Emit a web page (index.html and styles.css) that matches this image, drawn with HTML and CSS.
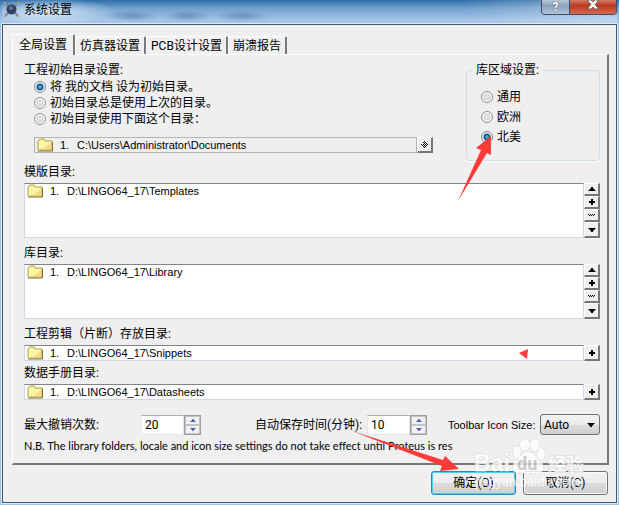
FILE: index.html
```
<!DOCTYPE html>
<html lang="zh-CN">
  <head>
    <meta charset="UTF-8" />
    <meta name="viewport" content="width=device-width, initial-scale=1.0" />
    <title>系统设置</title>
    <link rel="stylesheet" href="styles.css">
  </head>
  <body>
    <svg class="defs" width="0" height="0" aria-hidden="true">
      <symbol id="folder" viewBox="0 0 16 14">
        <path d="M1 12V3l2-2h4l1 2h7v9z" fill="#fbf3a0" stroke="#b0a030" />
        <path d="M2 4h12v1H2zM2 4h1v8H2z" fill="#fffbc8" />
        <path d="M5 12l9-7v7z" fill="#f8cc8c" opacity=".7" />
        <path d="M1 13h14.500V4" fill="none" stroke="#77762e" />
      </symbol>
      <symbol id="up" viewBox="0 0 8 4"><path d="M0 4h8L5 1V0H3v1z" /></symbol>
      <symbol id="down" viewBox="0 0 8 4"><path d="M0 0h8L5 3v1H3V3z" /></symbol>
      <symbol id="plus" viewBox="0 0 6 6"><path d="M2 0h2v2h2v2H4v2H2V4H0V2h2z" /></symbol>
      <symbol id="wave" viewBox="0 0 7 2"><path d="M0 0h1v1H0zM1 1h1v1H1zM2 0h1v1H2zM3 1h1v1H3zM4 0h1v1H4zM5 1h1v1H5zM6 0h1v1H6z" /></symbol>
      <symbol id="browse" viewBox="0 0 7 7"><path d="M3 0h1v1H3zM2 1h1v1H2zM4 1h1v1H4zM3 2h1v1H3zM5 2h1v1H5zM0 3h1v1H0zM2 3h1v1H2zM4 3h1v1H4zM6 3h1v1H6zM1 4h1v1H1zM3 4h1v1H3zM5 4h1v1H5zM2 5h1v1H2zM4 5h1v1H4zM3 6h1v1H3z" /></symbol>
    </svg>

    <div class="window">
      <header class="title-bar">
        <svg class="app-icon" width="15" height="15" viewBox="0 0 15 15" aria-hidden="true">
          <path d="M1 1l13 13M14 1L1 14" stroke="#7485a5" stroke-width="2" />
          <path d="M0 1h2M13 1h2M0 14h2M13 14h2" stroke="#c49a5c" stroke-width="2" />
          <circle cx="7.500" cy="7.500" r="5" fill="#33415f" />
          <circle cx="7" cy="6" r="2" fill="#5f73a0" />
        </svg>
        <h1>系统设置</h1>
        <div class="window-buttons">
          <button class="help" aria-label="帮助">?</button>
          <button class="close" aria-label="关闭">
            <svg width="12" height="10" viewBox="0 0 12 10"><path d="M1 0h3l2 2 2-2h3v1L8 4.500 11 8v1H8L6 7 4 9H1V8l3-3.500L1 1z" fill="#fff" stroke="#555b69" stroke-width=".8" /></svg>
          </button>
        </div>
      </header>

      <main class="client">
        <nav class="tabs">
          <button class="tab active">全局设置</button>
          <button class="tab">仿真器设置</button>
          <button class="tab">PCB设计设置</button>
          <button class="tab">崩溃报告</button>
        </nav>

        <section class="panel">
          <div class="top">
            <div class="initial" role="radiogroup" aria-labelledby="initialTitle">
              <p class="caption" id="initialTitle">工程初始目录设置:</p>
              <label class="option"><input type="radio" name="initial" checked />将 我的文档 设为初始目录。</label>
              <label class="option"><input type="radio" name="initial" />初始目录总是使用上次的目录。</label>
              <label class="option"><input type="radio" name="initial" />初始目录使用下面这个目录：</label>
              <div class="path-row initial-path">
                <div class="path disabled"><svg class="folder"><use href="#folder" /></svg><span>1.</span><span>C:\Users\Administrator\Documents</span></div>
                <div class="path-buttons">
                  <button aria-label="浏览"><svg width="7" height="7"><use href="#browse" /></svg></button>
                </div>
              </div>
            </div>
            <fieldset class="region">
              <legend>库区域设置:</legend>
              <label class="option"><input type="radio" name="region" />通用</label>
              <label class="option"><input type="radio" name="region" />欧洲</label>
              <label class="option"><input type="radio" name="region" checked />北美</label>
            </fieldset>
          </div>

          <div class="folders">
            <p class="caption">模版目录:</p>
            <div class="path-row tall">
              <div class="path"><svg class="folder"><use href="#folder" /></svg><span>1.</span><span>D:\LINGO64_17\Templates</span></div>
              <div class="path-buttons">
                <button aria-label="上移"><svg width="8" height="4"><use href="#up" /></svg></button>
                <button aria-label="添加"><svg width="6" height="6"><use href="#plus" /></svg></button>
                <button aria-label="移除"><svg width="7" height="2"><use href="#wave" /></svg></button>
                <button aria-label="下移"><svg width="8" height="4"><use href="#down" /></svg></button>
              </div>
            </div>
          </div>

          <div class="folders">
            <p class="caption">库目录:</p>
            <div class="path-row tall">
              <div class="path"><svg class="folder"><use href="#folder" /></svg><span>1.</span><span>D:\LINGO64_17\Library</span></div>
              <div class="path-buttons">
                <button aria-label="上移"><svg width="8" height="4"><use href="#up" /></svg></button>
                <button aria-label="添加"><svg width="6" height="6"><use href="#plus" /></svg></button>
                <button aria-label="移除"><svg width="7" height="2"><use href="#wave" /></svg></button>
                <button aria-label="下移"><svg width="8" height="4"><use href="#down" /></svg></button>
              </div>
            </div>
          </div>

          <div class="folders">
            <p class="caption">工程剪辑（片断）存放目录:</p>
            <div class="path-row">
              <div class="path"><svg class="folder"><use href="#folder" /></svg><span>1.</span><span>D:\LINGO64_17\Snippets</span></div>
              <div class="path-buttons">
                <button aria-label="添加"><svg width="6" height="6"><use href="#plus" /></svg></button>
              </div>
            </div>
          </div>

          <div class="folders close-up">
            <p class="caption">数据手册目录:</p>
            <div class="path-row">
              <div class="path"><svg class="folder"><use href="#folder" /></svg><span>1.</span><span>D:\LINGO64_17\Datasheets</span></div>
              <div class="path-buttons">
                <button aria-label="添加"><svg width="6" height="6"><use href="#plus" /></svg></button>
              </div>
            </div>
          </div>

          <div class="settings">
            <div class="setting undo">
              <label for="undo">最大撤销次数:</label>
              <div class="spin">
                <input type="text" id="undo" value="20" />
                <div class="spin-buttons">
                  <button aria-label="增加"><svg width="6" height="3" viewBox="0 0 8 4"><use href="#up" /></svg></button>
                  <button aria-label="减少"><svg width="6" height="3" viewBox="0 0 8 4"><use href="#down" /></svg></button>
                </div>
              </div>
            </div>
            <div class="setting autosave">
              <label for="autosave">自动保存时间(分钟):</label>
              <div class="spin">
                <input type="text" id="autosave" value="10" />
                <div class="spin-buttons">
                  <button aria-label="增加"><svg width="6" height="3" viewBox="0 0 8 4"><use href="#up" /></svg></button>
                  <button aria-label="减少"><svg width="6" height="3" viewBox="0 0 8 4"><use href="#down" /></svg></button>
                </div>
              </div>
            </div>
            <div class="setting icon-size">
              <label for="iconSize">Toolbar Icon Size:</label>
              <div class="select">
                <select id="iconSize"><option>Auto</option></select>
                <svg width="8" height="4"><use href="#down" /></svg>
              </div>
            </div>
          </div>
          <p class="note">N.B. The library folders, locale and icon size settings do not take effect until Proteus is res</p>
        </section>

        <footer class="actions">
          <button class="ok">确定(O)</button>
          <button>取消(C)</button>
        </footer>
      </main>

      <!-- watermark and arrows drawn over the dialog -->
      <svg class="marks" width="619" height="505" viewBox="0 0 619 505" aria-hidden="true">
        <g class="watermark">
          <text x="474" y="471" class="brand">Bai</text>
          <text x="548" y="471" class="brand-cn">经验</text>
          <ellipse cx="517" cy="452" rx="4" ry="6" />
          <ellipse cx="525" cy="445" rx="5" ry="6" />
          <ellipse cx="535" cy="445" rx="5" ry="6" />
          <ellipse cx="541" cy="454" rx="4" ry="6" />
          <path d="M528 452c6 0 8 6 13 10 4 4 3 11-3 11h-19c-7 0-8-7-4-11 5-4 7-10 13-10z" />
          <text x="517" y="470" class="du">du</text>
          <text x="475" y="486" class="address">jingyan.baidu.com</text>
        </g>
        <g fill="#fd3b38">
          <path d="M491 136l-15 12 5 2-23 51 29-48 4 2z" />
          <path d="M352 431l90 35-2 5 19-2-14-13-2 4z" />
          <path d="M519 353l9-4-1 10z" />
        </g>
      </svg>
    </div>
  </body>
</html>
```
FILE: styles.css
```
* {
  box-sizing: border-box;
}

body {
  margin: 0;
  background-color: #a9c4de;
  color: black;
  font-family: Roboto, "Noto Sans CJK SC", sans-serif;
  font-size: 12px;
  line-height: 16px;
}

p,
h1 {
  margin: 0;
}

button,
input,
select {
  margin: 0;
  padding: 0;
  color: black;
  font: inherit;
}

.defs {
  position: absolute;
}

.window {
  position: relative;
  padding: 0 2px 2px;
  background: linear-gradient(to bottom, #2f6ea8 0, #6f9fcd 8px, #a5c4e8 20px, #a9c4de 70px);
}

.title-bar {
  display: flex;
  align-items: flex-start;
  height: 24px;
  padding: 2px 0 0 2px;
  background:
    radial-gradient(ellipse 70px 14px at 45px 12px, rgba(225, 238, 252, 0.9), transparent),
    radial-gradient(ellipse 26px 6px at 130px 16px, rgba(70, 110, 155, 0.5), transparent),
    radial-gradient(ellipse 24px 6px at 185px 16px, rgba(70, 110, 155, 0.5), transparent),
    radial-gradient(ellipse 28px 6px at 240px 16px, rgba(70, 110, 155, 0.5), transparent),
    linear-gradient(to right, transparent 75%, rgba(215, 228, 242, 0.5));
}

.title-bar h1 {
  flex: 1;
  margin-left: 5px;
  font-size: 12px;
  font-weight: normal;
}

.window-buttons {
  display: flex;
  height: 15px;
  margin-top: -2px;
  border: 1px solid #3f4f66;
  border-top: none;
  border-radius: 0 0 4px 4px;
  overflow: hidden;
}

.window-buttons button {
  display: flex;
  align-items: center;
  justify-content: center;
  height: 14px;
  padding-bottom: 4px;
  border: none;
}

.window-buttons .help {
  width: 27px;
  padding-bottom: 1px;
  background: linear-gradient(to bottom, #b6c5d6 0, #8ea3bb 40%, #b0c4da);
  color: white;
  font-size: 12px;
  font-weight: bold;
  line-height: 12px;
  text-shadow: 0 0 1px #3f4f66, 0 0 1px #3f4f66;
}

.window-buttons .close {
  width: 47px;
  border-left: 1px solid #3f4f66;
  background: linear-gradient(to bottom, #d17a66 0, #bb3a20 40%, #d5694f);
}

.client {
  padding: 9px 7px 7px 9px;
  border: 1px solid #45586c;
  background-color: #efefef;
  box-shadow: 0 0 0 1px #dbe8f5;
}

.tabs {
  display: flex;
  align-items: flex-end;
}

.tab {
  height: 18px;
  padding: 0 4px;
  border: 1px solid white;
  border-right: 2px solid #787878;
  border-bottom: none;
  border-radius: 2px 2px 0 0;
  background-color: #efefef;
  line-height: 16px;
}

.tab.active {
  position: relative;
  height: 21px;
  margin-bottom: -1px;
  padding: 0 6px;
}

.panel {
  padding: 7px 7px 9px 11px;
  border: 1px solid white;
  border-right: 2px solid #787878;
  border-bottom: 2px solid #787878;
}

.top {
  display: flex;
  align-items: flex-start;
  justify-content: space-between;
}

.initial {
  flex: 1;
  max-width: 409px;
}

.option {
  display: flex;
  align-items: center;
}

.option input {
  appearance: none;
  width: 12px;
  height: 12px;
  margin-right: 4px;
  border: 1px solid #8e8f8f;
  border-radius: 50%;
  background: radial-gradient(circle, #eeeeee 0, #d2d5d8 3px, #f6f6f6 4px);
}

.option input:checked {
  border-color: #7d8790;
  background: radial-gradient(circle, #5fc4ee 0, #0b4b7c 3px, #eef4f8 4px);
}

.initial .option {
  margin-left: 10px;
}

.initial-path {
  margin: 10px 0 0 10px;
}

.region {
  width: 134px;
  margin: 0;
  padding: 11px 14px;
  border: 1px solid #d0dce6;
  border-radius: 4px;
  box-shadow: 0 1px 0 white;
}

.region legend {
  margin-left: -8px;
  padding: 0 3px;
}

.region .option {
  margin-bottom: 4px;
}

.folders {
  margin-top: 7px;
}

.top + .folders {
  margin-top: 3px;
}

.folders.close-up {
  margin-top: 4px;
}

.caption {
  margin-bottom: 3px;
}

.initial .caption {
  margin-bottom: 1px;
}

.path-row {
  display: flex;
  height: 16px;
}

.path-row.tall {
  height: 55px;
}

.path {
  display: flex;
  flex: 1;
  padding-left: 2px;
  border: 1px solid #d0d7e5;
  border-top-color: #83838b;
  background-color: white;
  line-height: 14px;
}

.path.disabled {
  border-color: #b4b4b4;
  background-color: #efefef;
}

.path .folder {
  width: 16px;
  height: 14px;
}

.path span:first-of-type {
  width: 17px;
  margin-left: 7px;
}

.path-buttons {
  display: grid;
  width: 16px;
  grid-auto-rows: 1fr;
}

.tall .path-buttons {
  grid-template-rows: 13px 13px 13px 16px;
}

.path-buttons button {
  display: flex;
  align-items: center;
  justify-content: center;
  border: 1px solid white;
  border-right: 2px solid #787878;
  border-bottom: 2px solid #787878;
  background-color: #efefef;
}

.settings {
  display: flex;
  align-items: center;
  margin-top: 14px;
}

.setting {
  display: flex;
  align-items: center;
}

.setting.undo label {
  width: 117px;
}

.setting.autosave {
  margin-left: 54px;
}

.setting.autosave label {
  width: 112px;
}

.spin {
  display: flex;
}

.spin input {
  width: 43px;
  height: 20px;
  padding: 0 3px;
  border: 1px solid #e2e6ee;
  border-top-color: #abadb3;
}

.spin-buttons {
  display: grid;
  width: 17px;
  height: 20px;
  border: 1px solid #a0a0a0;
}

.spin-buttons button {
  display: flex;
  align-items: center;
  justify-content: center;
  border: 1px solid #c2c2c6;
  background-color: #f2f2f2;
}

.spin-buttons svg {
  fill: #4a5fa5;
}

.select {
  position: relative;
}

.select select {
  appearance: none;
  display: block;
  width: 60px;
  height: 21px;
  padding: 0 3px;
  border: 1px solid #707070;
  border-radius: 3px;
  background: linear-gradient(to bottom, #f2f2f2 0, #ebebeb 50%, #dddddd 50%, #cfcfcf);
}

.select svg {
  position: absolute;
  top: 9px;
  right: 5px;
  pointer-events: none;
}

.setting.icon-size {
  margin-left: auto;
}

.icon-size label {
  width: 92px;
}

.path,
.icon-size label {
  font-family: "Liberation Sans", sans-serif;
  font-size: 11px;
}

.note {
  margin-top: 3px;
  font-family: Lato, sans-serif;
  font-size: 11px;
  white-space: nowrap;
}

.actions {
  display: flex;
  justify-content: flex-end;
  gap: 7px;
  margin: 6px 1px 0 0;
}

.actions button {
  width: 85px;
  height: 24px;
  border: 1px solid #707070;
  border-radius: 3px;
  background: linear-gradient(to bottom, #f2f2f2 0, #ebebeb 50%, #dddddd 50%, #cfcfcf);
  box-shadow: inset 0 0 0 1px #fafafa;
}

.actions .ok {
  border-color: #3c7fb1;
  box-shadow: inset 0 0 0 1px #48d1f7;
}

.marks {
  position: absolute;
  top: 0;
  left: 0;
  pointer-events: none;
}

.watermark {
  fill: white;
  stroke: #d4d4d4;
  stroke-width: 1px;
  paint-order: stroke;
  opacity: 0.8;
}

.brand {
  font-family: "Liberation Sans", sans-serif;
  font-size: 23px;
  font-weight: bold;
}

.brand-cn {
  font-size: 18px;
  font-weight: bold;
}

.address {
  font-size: 13px;
  stroke: none;
}

.du {
  fill: #c4c4c4;
  stroke: none;
  font-size: 18px;
  font-weight: bold;
}
```
